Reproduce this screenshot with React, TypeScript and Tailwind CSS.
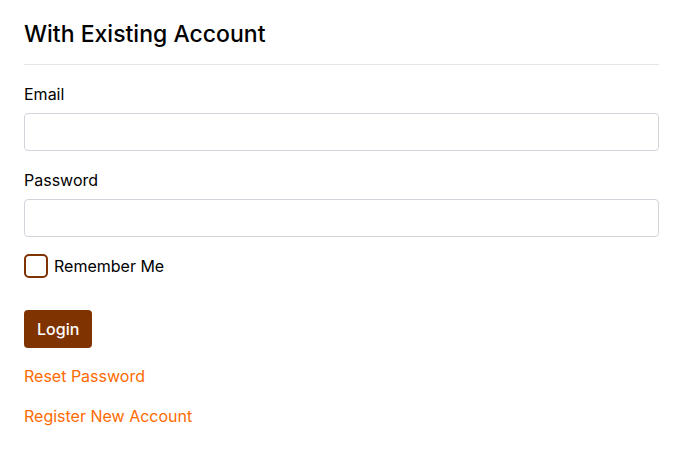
import React, { useState } from 'react';

export default function App() {
  const [remember, setRemember] = useState(false);

  return (
    <div className="min-h-screen bg-white px-6 pt-[18px] text-black" style={{ fontFamily: 'Inter, "Liberation Sans", sans-serif' }}>
      {/* Heading */}
      <h2 className="text-[23px] font-medium leading-8 pb-[14px] border-b border-[#e5e5e5]">With Existing Account</h2>

      <form className="flex flex-col" onSubmit={(e) => e.preventDefault()}>
        <label className="mt-[17px] text-base leading-6">Email</label>
        <input type="email" className="mt-[7px] h-[38px] w-full rounded border border-[#d1d5db] px-3 outline-none" />

        <label className="mt-[17px] text-base leading-6">Password</label>
        <input type="password" className="mt-[7px] h-[38px] w-full rounded border border-[#d1d5db] px-3 outline-none" />

        <label className="mt-[17px] flex items-center gap-[6px] text-base leading-6 cursor-pointer select-none">
          <span
            onClick={() => setRemember(!remember)}
            className="w-6 h-6 rounded-[5px] border-2 border-[#7f3300] bg-white flex items-center justify-center"
          >
            {remember && <span className="w-3 h-3 bg-[#7f3300] rounded-sm" />}
          </span>
          Remember Me
        </label>

        <div className="mt-8">
          <button type="submit" className="h-[38px] px-[13px] rounded bg-[#7f3300] text-white text-base font-medium">
            Login
          </button>
        </div>

        <a href="#" className="mt-4 text-base leading-6 text-[#ff6a00] w-fit">Reset Password</a>
        <a href="#" className="mt-4 text-base leading-6 text-[#ff6a00] w-fit">Register New Account</a>
      </form>
    </div>
  );
}
